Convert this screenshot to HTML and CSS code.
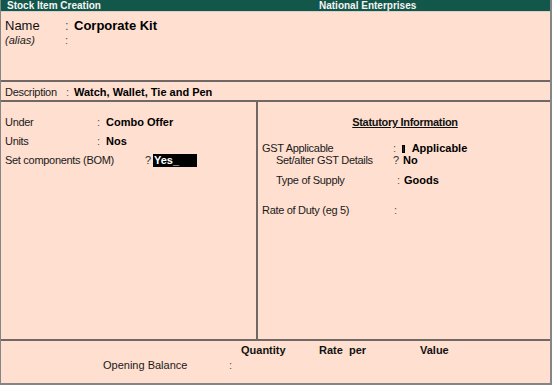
FILE: index.html
```html
<!DOCTYPE html>
<html>
<head>
<meta charset="utf-8">
<link rel="stylesheet" href="styles.css">
</head>
<body>
<div class="window">
  <div class="titlebar">
    <span class="t-left">Stock Item Creation</span>
    <span class="t-right">National Enterprises</span>
  </div>

  <section class="name-sec">
    <div class="name-row">
      <span class="name-label">Name</span>
      <span class="colon">:</span>
      <span class="name-value">Corporate Kit</span>
    </div>
    <div class="alias-row">
      <span class="alias-label">(alias)</span>
      <span class="colon">:</span>
      <span></span>
    </div>
  </section>

  <section class="desc-sec">
    <span class="label">Description</span>
    <span class="colon">:</span>
    <span class="value">Watch, Wallet, Tie and Pen</span>
  </section>

  <section class="mid">
    <div class="left-col">
      <div class="lrow">
        <span class="label">Under</span>
        <span class="colon">:</span>
        <span class="value">Combo Offer</span>
      </div>
      <div class="lrow">
        <span class="label">Units</span>
        <span class="colon">:</span>
        <span class="value">Nos</span>
      </div>
      <div class="bom-row">
        <span class="label">Set components (BOM)</span>
        <span class="q">?</span>
        <span class="yes-box">Yes_</span>
      </div>
    </div>
    <div class="right-col">
      <div class="stat-title"><span>Statutory Information</span></div>
      <div class="srow gst">
        <span class="label">GST Applicable</span>
        <span class="colon">:</span>
        <span class="value"><span class="glyph-box"></span> Applicable</span>
      </div>
      <div class="srow sub alter">
        <span class="label">Set/alter GST Details</span>
        <span class="q">?</span>
        <span class="value">No</span>
      </div>
      <div class="srow sub supply">
        <span class="label">Type of Supply</span>
        <span class="colon">:</span>
        <span class="value">Goods</span>
      </div>
      <div class="srow rate">
        <span class="label">Rate of Duty (eg 5)</span>
        <span class="colon">:</span>
        <span class="value"></span>
      </div>
    </div>
  </section>

  <section class="bottom">
    <span class="h-qty">Quantity</span>
    <span class="h-rate">Rate&nbsp; per</span>
    <span class="h-value">Value</span>
    <span class="ob-label">Opening Balance</span>
    <span class="ob-colon">:</span>
  </section>
</div>
</body>
</html>
```

FILE: styles.css
```css
* { box-sizing: border-box; }

html, body {
  margin: 0;
  padding: 0;
  background: #fedfd0;
}

.window {
  width: 552px;
  height: 385px;
  background: #fedfd0;
  border-left: 1px solid #858585;
  border-right: 2px solid #858585;
  border-bottom: 2px solid #858585;
  display: flex;
  flex-direction: column;
  font-family: "Liberation Sans", Arial, sans-serif;
  font-size: 11px;
  color: #111;
}

.titlebar {
  height: 12px;
  background: #13574a;
  border-bottom: 1px solid #d8cfc8;
  display: flex;
  align-items: center;
  padding-left: 6px;
  color: #f4f4f4;
  font-weight: bold;
  font-size: 10px;
  line-height: 11px;
}

.t-left { width: 312px; }

.colon { color: #555; }

.label { letter-spacing: -0.3px; color: #1a1a1a; }
.value { font-weight: bold; color: #000; }

/* Name section */
.name-sec {
  height: 70px;
  border-bottom: 2px solid #6f6864;
  padding: 6px 0 0 4px;
}

.name-row, .alias-row {
  display: grid;
  grid-template-columns: 60px 9px auto;
}

.name-row {
  font-size: 13px;
  line-height: 16px;
}

.name-value { font-weight: bold; color: #000; }

.alias-row {
  font-size: 11px;
  line-height: 13px;
}

.alias-label { font-style: italic; color: #1a1a1a; }

/* Description */
.desc-sec {
  height: 20px;
  border-bottom: 2px solid #6f6864;
  padding: 4px 0 0 4px;
  line-height: 13px;
  display: grid;
  grid-template-columns: 61px 8px auto;
}

/* Middle */
.mid {
  height: 237px;
  display: flex;
}

.left-col {
  width: 257px;
  border-right: 2px solid #6f6864;
  padding: 11px 0 0 4px;
}

.lrow {
  display: grid;
  grid-template-columns: 92px 9px auto;
  line-height: 19px;
}

.bom-row {
  display: grid;
  grid-template-columns: 140px 8px auto;
  line-height: 19px;
  align-items: center;
}

.q { color: #333; }

.yes-box {
  justify-self: start;
  width: 44px;
  height: 13px;
  background: #000;
  color: #fff;
  font-weight: bold;
  line-height: 13px;
  padding-left: 1px;
}

.right-col {
  flex: 1;
  padding: 11px 0 0 4px;
}

.stat-title {
  line-height: 19px;
  text-align: center;
  font-weight: bold;
  letter-spacing: -0.3px;
  padding-right: 2px;
}

.stat-title span { text-decoration: underline; }

.srow {
  display: grid;
  grid-template-columns: 131px 9px auto;
  line-height: 12px;
}

.srow.gst { margin-top: 10px; }
.srow.sub .label { padding-left: 14px; }
.srow.alter .value { padding-left: 1px; }
.srow.supply { margin-top: 8px; }
.srow.supply .colon { padding-left: 4px; }
.srow.supply .value { padding-left: 2px; }
.srow.rate { margin-top: 18px; }
.srow.rate .colon { padding-left: 1px; }

.glyph-box {
  display: inline-block;
  width: 3px;
  height: 8px;
  background: #222;
  border: 1px solid #000;
  margin-right: 4px;
  vertical-align: -1px;
}

/* Bottom */
.bottom {
  flex: 1;
  border-top: 2px solid #6f6864;
  padding-top: 2px;
  display: grid;
  grid-template-columns: 102px 126px 12px 78px 101px auto;
  grid-template-rows: 15px 15px;
  line-height: 15px;
  align-content: start;
}

.h-qty { grid-column: 4; grid-row: 1; font-weight: bold; }
.h-rate { grid-column: 5; grid-row: 1; font-weight: bold; }
.h-value { grid-column: 6; grid-row: 1; font-weight: bold; }
.ob-label { grid-column: 2; grid-row: 2; color: #1a1a1a; }
.ob-colon { grid-column: 3; grid-row: 2; color: #555; }
```
